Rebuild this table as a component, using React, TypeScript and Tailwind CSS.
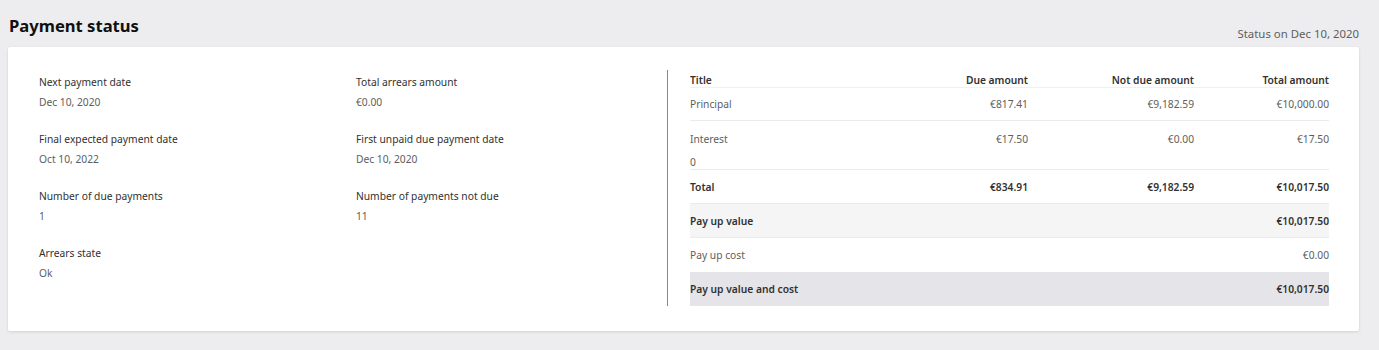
import React from "react";

const fields: [string, string][][] = [
  [
    ["Next payment date", "Dec 10, 2020"],
    ["Total arrears amount", "€0.00"],
  ],
  [
    ["Final expected payment date", "Oct 10, 2022"],
    ["First unpaid due payment date", "Dec 10, 2020"],
  ],
  [
    ["Number of due payments", "1"],
    ["Number of payments not due", "11"],
  ],
  [["Arrears state", "Ok"]],
];

const cols = "grid grid-cols-[1fr_170px_166px_135px]";

function Field({ label, value }: { label: string; value: string }) {
  return (
    <div className="w-[317px] shrink-0">
      <div className="leading-[16px] text-[#323130]">{label}</div>
      <div className="mt-[4px] leading-[16px] text-[#605e5c]">{value}</div>
    </div>
  );
}

export default function App() {
  return (
    <div
      className="min-h-[350px] bg-[#ededf0] text-[10.25px]"
      style={{ fontFamily: '"Noto Sans", "Open Sans", sans-serif' }}
    >
      <div className="flex items-end justify-between pl-[9px] pr-[20px] pt-[14px]">
        <h1 className="text-[16.6px] font-bold leading-[24px] text-[#11100f]">Payment status</h1>
        <span className="mb-[-4px] text-[11.4px] leading-[16px] text-[#605e5c]">Status on Dec 10, 2020</span>
      </div>

      <div className="ml-[8px] mr-[20px] mt-[9px] flex rounded-[2px] bg-white pb-[25px] pl-[31px] pr-[30px] pt-[23px] shadow-[0_1px_3px_rgba(0,0,0,0.12)]">
        <div className="flex w-[628px] flex-col gap-[21px] pt-[4px]">
          {fields.map((row, i) => (
            <div key={i} className="flex">
              {row.map(([l, v]) => (
                <Field key={l} label={l} value={v} />
              ))}
            </div>
          ))}
        </div>

        <div className="w-px bg-[#8a8886]" />

        <div className="ml-[22px] flex-1 self-start">
          <div className={`${cols} h-[18px] items-center border-b border-[#f0f0f0] pt-[3px] font-semibold text-[#323130]`}>
            <span>Title</span>
            <span className="text-right">Due amount</span>
            <span className="text-right">Not due amount</span>
            <span className="text-right">Total amount</span>
          </div>
          <div className={`${cols} h-[33px] items-center border-b border-[#ebebeb] pt-[2px] text-[#605e5c]`}>
            <span>Principal</span>
            <span className="text-right">€817.41</span>
            <span className="text-right">€9,182.59</span>
            <span className="text-right">€10,000.00</span>
          </div>
          <div className={`${cols} h-[49px] border-b border-[#ebebeb] text-[#605e5c]`}>
            <div className="flex flex-col pt-[10px] leading-[16px]">
              <span>Interest</span>
              <span className="mt-[7px]">0</span>
            </div>
            <span className="pt-[10px] text-right leading-[16px]">€17.50</span>
            <span className="pt-[10px] text-right leading-[16px]">€0.00</span>
            <span className="pt-[10px] text-right leading-[16px]">€17.50</span>
          </div>
          <div className={`${cols} h-[34px] items-center border-b border-[#ebebeb] pt-[2px] font-semibold text-[#323130]`}>
            <span>Total</span>
            <span className="text-right">€834.91</span>
            <span className="text-right">€9,182.59</span>
            <span className="text-right">€10,017.50</span>
          </div>
          <div className="flex h-[34px] items-center justify-between border-b border-[#ebebeb] bg-[#f5f5f5] pt-[2px] font-semibold text-[#323130]">
            <span>Pay up value</span>
            <span>€10,017.50</span>
          </div>
          <div className="flex h-[34px] items-center justify-between pt-[2px] text-[#605e5c]">
            <span>Pay up cost</span>
            <span>€0.00</span>
          </div>
          <div className="flex h-[34px] items-center justify-between bg-[#e5e5e9] pt-[2px] font-semibold text-[#323130]">
            <span>Pay up value and cost</span>
            <span>€10,017.50</span>
          </div>
        </div>
      </div>
    </div>
  );
}
